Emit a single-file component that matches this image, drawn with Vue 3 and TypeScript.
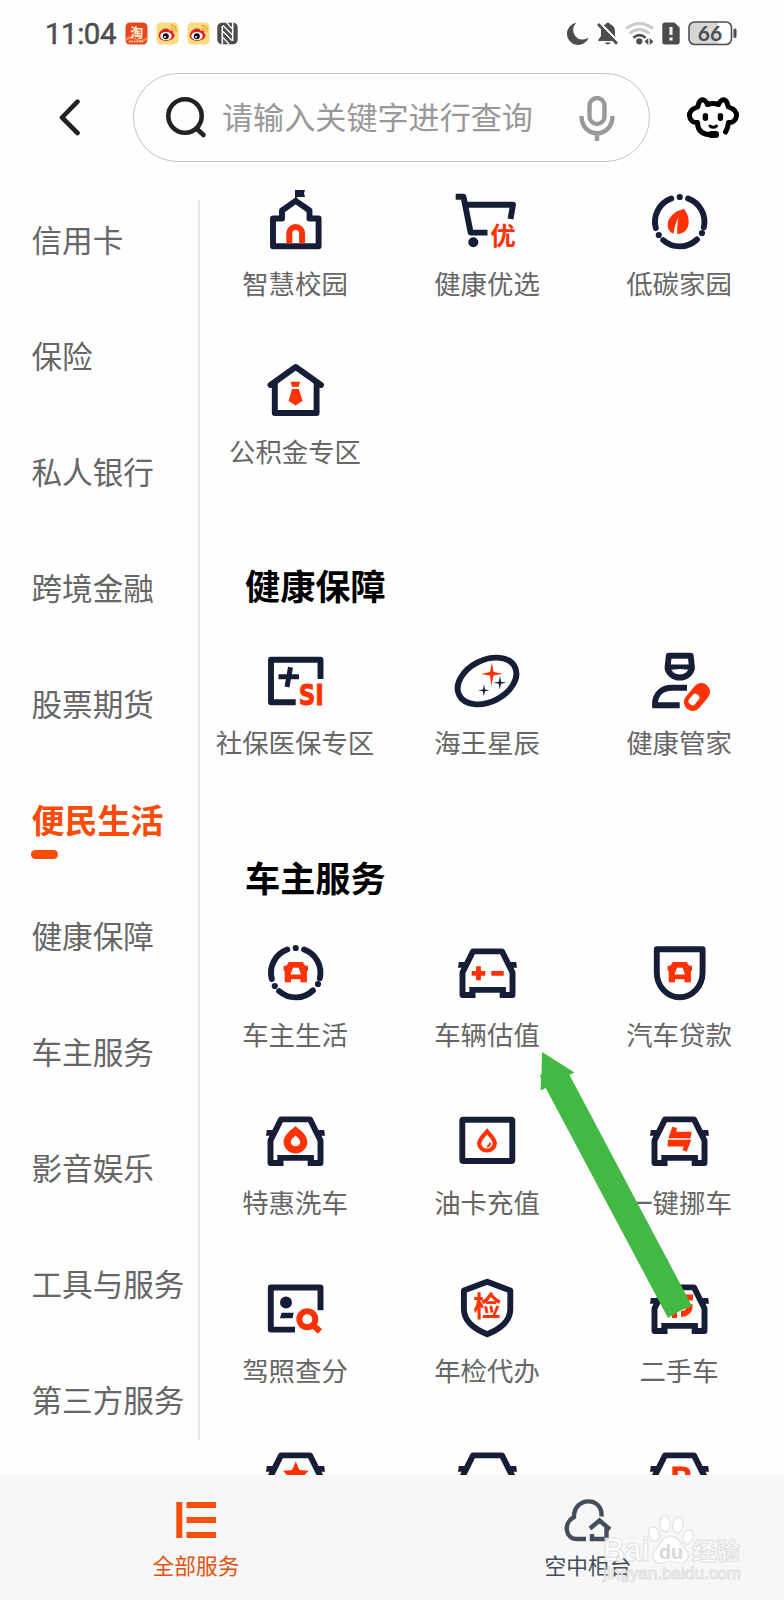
<script setup lang="ts">
interface Service {
  icon: string
  label: string
}
interface Section {
  title: string
  items: Service[]
}

const menu: string[] = [
  '信用卡', '保险', '私人银行', '跨境金融', '股票期货', '便民生活',
  '健康保障', '车主服务', '影音娱乐', '工具与服务', '第三方服务',
]
const activeMenu = '便民生活'

const sections: Section[] = [
  {
    title: '',
    items: [
      { icon: 'school', label: '智慧校园' },
      { icon: 'cart', label: '健康优选' },
      { icon: 'leaf', label: '低碳家园' },
      { icon: 'house', label: '公积金专区' },
    ],
  },
  {
    title: '健康保障',
    items: [
      { icon: 'social', label: '社保医保专区' },
      { icon: 'stars', label: '海王星辰' },
      { icon: 'doctor', label: '健康管家' },
    ],
  },
  {
    title: '车主服务',
    items: [
      { icon: 'carlife', label: '车主生活' },
      { icon: 'carvalue', label: '车辆估值' },
      { icon: 'carloan', label: '汽车贷款' },
      { icon: 'carwash', label: '特惠洗车' },
      { icon: 'oilcard', label: '油卡充值' },
      { icon: 'carmove', label: '一键挪车' },
      { icon: 'licence', label: '驾照查分' },
      { icon: 'inspect', label: '年检代办' },
      { icon: 'usedcar', label: '二手车' },
      { icon: 'carstar', label: '' },
      { icon: 'car', label: '' },
      { icon: 'carpark', label: '' },
    ],
  },
]

const carIcons = ['carvalue', 'carwash', 'carmove', 'usedcar', 'carstar', 'car', 'carpark']
const ringIcons = ['leaf', 'carlife']
</script>

<template>
  <div class="page">
    <div class="status">
      <span class="time">11:04</span>
      <svg class="app" width="23" height="23" viewBox="0 0 23 23">
        <rect x=".5" y=".5" width="22" height="22" rx="4.5" fill="#e8481f" />
        <path d="M1 16Q6 12 11 16T22 15V18Q16 21 11 18T1 19Z" fill="#f58a4c" />
        <text x="11.7" y="14.6" font-size="13" font-weight="700" text-anchor="middle" fill="#fff1d6">淘</text>
        <path d="M4 19.5h15" stroke="#ffd9b0" stroke-width="2" stroke-dasharray="1.5 1" />
      </svg>
      <svg v-for="n in 2" :key="n" class="app" width="23" height="23" viewBox="0 0 23 23">
        <rect x=".5" y=".5" width="22" height="22" rx="4.5" fill="#fbdc7c" />
        <path d="M10 6.5C5 7 1.500 11.500 3 15.300 4.500 19 11 20 15.500 17.500 19 15.500 19.500 12.500 17 11 17.500 9 16 7.800 13.300 8.700 13.300 7 12 6.300 10 6.500Z" fill="#d8232a" />
        <ellipse cx="10" cy="14" rx="5.700" ry="4.100" fill="#fff" />
        <circle cx="9.800" cy="14.200" r="3" fill="#111" />
        <circle cx="9" cy="15" r="1" fill="#fff" />
        <path d="M15 3.500Q20.500 3.500 20 9.500M15 6.300Q17.700 6.300 17.500 9" fill="none" stroke="#eda43a" stroke-width="1.300" stroke-linecap="round" />
      </svg>
      <svg class="nfc" width="21" height="23" viewBox="0 0 21 23">
        <rect x=".3" y=".7" width="20.400" height="21.600" rx="4.500" fill="#4d4d4d" />
        <path d="M5.300 4V22.500M15.700 .500V19" stroke="#fff" stroke-width="1.500" fill="none" />
        <path d="M6 3.500L15 12.500M6 9.500L15 18.500M6 15.500L12 22M9.500 .500L15 6.500" stroke="#fff" stroke-width="1.200" fill="none" />
      </svg>
      <span class="grow"></span>
      <svg class="moon" width="22" height="23" viewBox="0 0 22 23">
        <path d="M9.500 .700A11.200 11.200 0 1 0 21.800 15.300A9.500 9.500 0 0 1 9.500 .700Z" fill="#4d4d4d" />
      </svg>
      <svg class="bell" width="21" height="23" viewBox="0 0 21 23">
        <path d="M1.500 19V17.500L4 14V9C4 5 6.500 2.800 8.800 2.300 8.800 .100 13 .100 13 2.300 15.500 3 18 5.500 18 9V14L20 17.500V19Z" fill="#4d4d4d" />
        <path d="M7.500 20.500h6.500q-3.200 4-6.500 0Z" fill="#4d4d4d" />
        <path d="M2.500 0.500L21 19.500" stroke="#fff" stroke-width="2.400" />
        <path d="M1 2L20 21.700" stroke="#4d4d4d" stroke-width="2.800" />
      </svg>
      <svg class="wifi" width="29" height="23" viewBox="0 0 29 23">
        <g fill="none" stroke-width="2.800">
          <path d="M1 6.700Q14.500-3.700 28 6.700M4.500 11.500Q14.500 3.500 24.500 11.500" stroke="#c9c9c9" />
          <path d="M8.500 15.800Q14.500 10.500 20.500 15.800" stroke="#4d4d4d" />
        </g>
        <circle cx="14.300" cy="19.300" r="3.100" fill="#4d4d4d" />
        <path d="M19.500 19.500L23.300 16V23ZM28.500 19.500L24.700 16V23Z" fill="#4d4d4d" />
      </svg>
      <svg class="sim" width="18" height="23" viewBox="0 0 18 23">
        <path d="M3 .500H12.500L17.700 5.500V20Q17.700 22.500 15 22.500H3Q.300 22.500 .300 20V3Q.300 .500 3 .500Z" fill="#4d4d4d" />
        <path d="M9 5V13M9 15.500V18.500" stroke="#fff" stroke-width="3" />
      </svg>
      <svg class="battery" width="49" height="25" viewBox="0 0 49 25">
        <path d="M6 1.500H30V23H6Q1.500 23 1.500 19V6Q1.500 1.500 6 1.500Z" fill="#d6d6d6" />
        <rect x="1" y="1" width="42.500" height="22.500" rx="5.500" fill="none" stroke="#4d4d4d" stroke-width="1.600" />
        <path d="M47 9V15.500" stroke="#4d4d4d" stroke-width="3" stroke-linecap="round" />
        <text class="digits" x="22" y="19.700" font-size="21" font-weight="700" text-anchor="middle" fill="#4d4d4d">66</text>
      </svg>
    </div>

    <header class="header">
      <svg class="back" width="24" height="40" viewBox="0 0 24 40">
        <path d="M18.500 3.700L3 19.500L18.500 35" fill="none" stroke="#222" stroke-width="4.600" stroke-linecap="round" stroke-linejoin="round" />
      </svg>
      <div class="search">
        <svg width="42" height="42" viewBox="0 0 42 42">
          <circle cx="19" cy="19" r="16.700" fill="none" stroke="#222" stroke-width="4.600" />
          <path d="M31.500 32.500L37.500 38" stroke="#222" stroke-width="4.600" stroke-linecap="round" />
        </svg>
        <span class="placeholder">请输入关键字进行查询</span>
        <svg width="36" height="46" viewBox="0 0 36 46" fill="none" stroke="#999" stroke-width="4.400">
          <rect x="10.500" y="3" width="15" height="26" rx="7.500" />
          <path d="M2.500 21C2.500 44 33.500 44 33.500 21M18 38V46" />
        </svg>
      </div>
      <svg class="service" width="56" height="44" viewBox="0 0 56 44">
        <g fill="none" stroke="#000" stroke-width="5" stroke-linecap="round" stroke-linejoin="round">
          <path d="M22.500 8.500Q28 6.700 33.500 8.500C35 4.500 38 2.800 40.500 4.500C42.500 6 42.300 9 43.500 11C48 12.500 52 15.500 51.500 20C51 24.500 47.500 27 43.500 26.500C43 30 42.500 33 40.500 36M22.500 8.500C21 4.500 18 2.800 15.500 4.500C13.500 6 13.700 9 12.500 11C8 12.500 4 15.500 4.500 20C5 24.500 8.500 27 12.500 26.500C12.500 35 18 38.500 26 38.700" />
        </g>
        <rect x="17.700" y="17" width="5.400" height="8" rx="2.700" />
        <rect x="32.700" y="17" width="5.400" height="8" rx="2.700" />
        <path d="M25 30Q28.300 32.500 31.500 30" fill="none" stroke="#000" stroke-width="3" stroke-linecap="round" />
        <rect x="23" y="35" width="11" height="7" rx="3.300" />
      </svg>
    </header>

    <main class="main">
      <nav class="menu">
        <div v-for="m in menu" :key="m" class="menu-item" :class="{ active: m === activeMenu }">
          <span>{{ m }}</span>
        </div>
      </nav>
      <div class="content">
        <section v-for="s in sections" :key="s.title" class="section">
          <h2 v-if="s.title">{{ s.title }}</h2>
          <div class="grid">
            <div v-for="item in s.items" :key="item.icon" class="cell">
              <svg class="icon" width="72" height="72" viewBox="0 0 72 72">
                <g v-if="carIcons.includes(item.icon)">
                  <path class="line" d="M18.300 53.900H54.900M24.500 59H11.500V36.500L22 15.400H51L61.500 36.500V59H48.700" />
                  <path class="ink" d="M7.800 26H17L14 35L10.500 31.700H7ZM65.200 26H56L59 35L62.500 31.700H66Z" />
                </g>
                <g v-if="ringIcons.includes(item.icon)">
                  <path class="line round" d="M45.100 13.500A24.800 24.800 0 0 1 60.800 42.300M53.900 54.500A24.800 24.800 0 0 1 20.200 55.100M12.800 43.100A24.800 24.800 0 0 1 28.300 13.500" />
                  <circle class="ink" cx="36.700" cy="12" r="3.100" />
                  <circle class="ink" cx="59" cy="48" r="3.100" />
                  <circle class="ink" cx="15.800" cy="50" r="3.100" />
                </g>
                <path v-if="item.icon === 'carlife' || item.icon === 'carloan'" class="hot" fill-rule="evenodd" d="M30 26H43.500L46 29.500L49 30V34.500L47.900 35V46.300H41.500V43.300H32V46.300H25.700V35L24.600 34.500V30L27.500 29.500ZM34 31.700H39.700L42 38.500H31.500Z" />

                <g v-if="item.icon === 'school'">
                  <path class="line" d="M14 61.200V33.500H23V25.500L36.700 15.800L50.500 25.500V33.500H59.600V61.200Z" />
                  <path class="ink" d="M36 5H46L45 8L46 12H38V17H36Z" />
                  <path class="hotline" d="M30.300 58.400V48.500A6.400 6.400 0 0 1 43.100 48.500V58.400" />
                </g>
                <g v-else-if="item.icon === 'cart'">
                  <path class="line" d="M4.700 11.800H12.500L19.700 47.600H36.500M14.500 19.700H62L59.500 34" />
                  <circle class="ink" cx="22.300" cy="57.300" r="5" />
                  <text class="mark" x="52" y="60" font-size="25.500">优</text>
                </g>
                <path v-else-if="item.icon === 'leaf'" class="hot" d="M41 24C31 26 24.500 33 24.700 40C24.800 44.500 27 47.500 30.500 48.700C31.500 42 33 37 35.700 31.700C34.500 37 34 43 34.200 49C42 49 46 43 45.700 36C45.500 31 43.500 27 41 24Z" />
                <g v-else-if="item.icon === 'house'">
                  <path class="line" d="M15.800 30V60H57.600V30" />
                  <path class="line round" d="M11.500 32L36.700 14L62 32" />
                  <path class="hot" d="M31.700 28.700H41L39.700 33.800H33ZM33 36H39.800L43.500 48L36.600 52.500L29.600 48Z" />
                </g>
                <g v-else-if="item.icon === 'social'">
                  <path class="line" d="M61.500 35V15.700H12V58.300H36.700" />
                  <path class="line plus" d="M19.500 32.700H40M31.500 23.300L28 43" />
                  <text class="mark wide" x="52.300" y="60.500" font-size="29" textLength="25" lengthAdjust="spacingAndGlyphs" stroke="#fe3204">SI</text>
                </g>
                <g v-else-if="item.icon === 'stars'">
                  <ellipse class="line" cx="36" cy="37" rx="31.200" ry="20.800" transform="rotate(-27 36 37)" />
                  <path class="hot" d="M41 18.500L42.500 28L52 29.800L42.500 31.500L40.300 42L39 31.500L30 30L39 28Z" />
                  <path class="ink" d="M49 32L50 37.700L55.500 38.700L50 39.700L48.700 45.500L47.700 39.700L42.500 38.700L47.700 37.700ZM33 40.500L34 45.500L38.500 46.300L34 47.200L32.700 52L31.800 47.200L27 46.300L31.800 45.500Z" />
                </g>
                <g v-else-if="item.icon === 'doctor'">
                  <path class="line" d="M25.800 11.800H47.700L49 24A12.400 11.300 0 0 1 24.500 24ZM12 61.300C11.500 50 19 43.700 29 43.700H44M9.200 61.300H36.700" />
                  <path class="ink" d="M24 20.500H50V26.500Q37 23.500 24 26.500Z" />
                  <rect class="hot" x="38.500" y="44.200" width="31" height="17.600" rx="8.800" transform="rotate(-50 54 53)" />
                  <rect fill="#fff" x="45" y="51.700" width="12" height="7.500" rx="3" transform="rotate(-50 51 55.500)" />
                </g>
                <g v-else-if="item.icon === 'carvalue'">
                  <path class="hotline thin" d="M20.700 37.300H34.300M27.500 30.300V44.300M40.300 37.300H52.700" />
                </g>
                <path v-else-if="item.icon === 'carloan'" class="line" d="M13.800 13.200H59.600V36.500A22.900 24.700 0 0 1 13.800 36.500Z" />
                <path v-else-if="item.icon === 'carwash'" class="hot" fill-rule="evenodd" d="M36.500 22C40 25.500 48.400 30.500 48.400 37.800A11.900 11.700 0 0 1 24.600 37.800C24.600 30.500 33 25.500 36.500 22ZM36.500 31.500C34.500 33.500 31.800 35.500 31.800 38A4.700 4.300 0 0 0 41.200 38C41.200 35.500 38.500 33.500 36.500 31.500Z" />
                <g v-else-if="item.icon === 'oilcard'">
                  <rect class="line" x="11.300" y="15.700" width="50" height="41.300" rx="1" />
                  <path class="hotline drop" d="M36.200 27.500C38.500 30.500 43.800 35 43.800 39.500A7.800 7 0 0 1 28.200 39.500C28.200 35 33.500 30.500 36.200 27.500Z" />
                  <path class="hotline fine" d="M36 42.700Q39 42 39.300 38.700" />
                </g>
                <path v-else-if="item.icon === 'carmove'" class="hot" d="M29.300 22.700L34 24L33.300 27.700H48.700L47.500 34.300H25.300ZM24.900 35.700H48.300L43.700 47.700L39.500 46.300L40.700 42.500H24.600Z" />
                <g v-else-if="item.icon === 'licence'">
                  <path class="line" d="M61.500 38.300V15.500H11.800V57.600H36" />
                  <circle class="ink" cx="27" cy="30.600" r="6" />
                  <path class="ink" d="M22.500 40.700H34.700L33.500 46.300H21Z" />
                  <circle class="hotline" cx="48.300" cy="47.300" r="8" />
                  <path class="hotline" d="M53 52L61 59.500" />
                </g>
                <g v-else-if="item.icon === 'inspect'">
                  <path class="line" d="M36.200 9.700L59.300 18.500V37C59.300 50 48 57.500 36.200 62.200C24.500 57.500 12.900 50 12.900 37V18.500Z" />
                  <text class="mark" x="36.300" y="45.300" font-size="28">检</text>
                </g>
                <path v-else-if="item.icon === 'usedcar'" class="hotline" d="M36 25.500H50M46.500 32V33C47 38 44 42 38 42M29 43H34" />
                <path v-else-if="item.icon === 'carstar'" class="hot" d="M36.700 21.500L40.500 30L49.500 30.800L43 38L45 46L36.700 42L28.500 46L30.500 38L24 30.800L33 30Z" />
                <text v-else-if="item.icon === 'carpark'" class="mark latin" x="38" y="46.500" font-size="30" stroke="#fe3204">P</text>
              </svg>
              <span v-if="item.label" class="label">{{ item.label }}</span>
            </div>
          </div>
        </section>
      </div>
    </main>

    <footer class="tabs">
      <div class="tab on">
        <svg width="48" height="44" viewBox="0 0 48 44" fill="#f4500c">
          <path d="M4.300 4H10.300V40H4.300ZM14.500 4H44V10H14.500ZM14.500 19H44V25H14.500ZM14.500 34H44V40H14.500Z" />
        </svg>
        <span>全部服务</span>
      </div>
      <div class="tab">
        <svg width="48" height="44" viewBox="0 0 48 44" fill="none" stroke="#434d5c" stroke-width="4.400">
          <path d="M37.500 18.500C39 -2 9.500 -1.500 10 19C-1 25 1 41 13 41H22M26 30.500L35.500 22.500L46 31.500M28 36V41H42.500V30" />
        </svg>
        <span>空中柜台</span>
      </div>
    </footer>

    <svg class="arrow" width="154" height="268" viewBox="0 0 154 268">
      <path d="M3 1L35.500 21.500L30.500 24L153 255Q141 259 129 267L6.700 37L1.500 39.500L2 27L1 25L2.500 23Z" fill="#43b944" />
    </svg>
    <svg class="watermark latin" width="146" height="72" viewBox="0 0 146 72">
      <g fill="#fff" fill-opacity=".85" stroke="#d4d4d4" stroke-opacity=".65" stroke-width="1.200">
        <text x="2" y="47" font-size="33" font-weight="700" textLength="47" lengthAdjust="spacingAndGlyphs">Bai</text>
        <ellipse cx="53" cy="20" rx="5" ry="7.500" transform="rotate(-15 53 20)" />
        <ellipse cx="64" cy="10" rx="5.200" ry="8" />
        <ellipse cx="77" cy="11" rx="5.200" ry="8" transform="rotate(8 77 11)" />
        <ellipse cx="87" cy="23" rx="5" ry="7.500" transform="rotate(18 87 23)" />
        <path d="M69.500 22C79 22 80 32 85 36C90 42 86 49 79 49Q70 46 61 49C53 50 49 42 54 36C60 32 60 22 69.500 22Z" />
        <text x="91" y="46" font-size="24" font-weight="700">经验</text>
        <text x="2" y="65" font-size="17" textLength="138" lengthAdjust="spacingAndGlyphs">jingyan.baidu.com</text>
      </g>
      <text x="58" y="45" font-size="21" font-weight="700" textLength="24" lengthAdjust="spacingAndGlyphs" fill="#d8d8d8">du</text>
    </svg>
  </div>
</template>

<style>
body {
  margin: 0;
  background: #fefefe;
}
</style>

<style scoped>
.page {
  position: relative;
  display: flex;
  flex-direction: column;
  width: 784px;
  height: 1600px;
  overflow: hidden;
  background: #fefefe;
  font-family: "Noto Sans CJK SC", sans-serif;
}
svg {
  display: block;
  flex: none;
}
.status {
  display: flex;
  align-items: center;
  box-sizing: border-box;
  height: 66px;
  padding: 0 47px 0 45px;
}
.time {
  width: 79.5px;
  padding-top: 2px;
  font: 400 29.5px/40px Roboto, sans-serif;
  letter-spacing: -0.5px;
  color: #4d4d4d;
  -webkit-text-stroke: 0.5px #4d4d4d;
  white-space: nowrap;
}
.app {
  margin-right: 8.3px;
}
.nfc {
  margin-left: -1px;
}
.grow {
  flex: 1;
}
.moon {
  margin-right: 8px;
}
.bell {
  margin-right: 7px;
}
.wifi {
  margin-right: 8px;
}
.sim {
  margin-right: 8px;
}
.digits {
  font-family: Lato, sans-serif;
}
.header {
  display: flex;
  align-items: center;
  box-sizing: border-box;
  height: 104px;
  padding: 0 43px 1px 59px;
}
.search {
  display: flex;
  align-items: center;
  box-sizing: border-box;
  width: 517px;
  height: 89px;
  margin-left: 50px;
  padding: 0 34px 0 32px;
  border: 1px solid #c4c4c4;
  border-radius: 45px;
}
.placeholder {
  flex: 1;
  padding: 0 0 3px 14px;
  font-size: 31.1px;
  line-height: 44px;
  font-weight: 400;
  color: #999;
  white-space: nowrap;
}
.service {
  margin-left: auto;
}
.main {
  display: flex;
  height: 1305px;
  overflow: hidden;
}
.menu {
  display: flex;
  flex-direction: column;
  gap: 36px;
  box-sizing: border-box;
  width: 200px;
  height: 1240px;
  margin-top: 30px;
  padding-left: 31.500px;
  border-right: 2px solid #e6e6e6;
}
.menu-item {
  display: flex;
  flex-direction: column;
  justify-content: center;
  box-sizing: border-box;
  height: 80px;
  padding-bottom: 3px;
  font-size: 30.6px;
  line-height: 44px;
  color: #666;
  white-space: nowrap;
}
.menu-item.active {
  position: relative;
  font-size: 33px;
  font-weight: 700;
  color: #fa4b08;
}
.menu-item.active::after {
  content: "";
  position: absolute;
  left: -0.5px;
  bottom: 1px;
  width: 27px;
  height: 9px;
  border-radius: 5px;
  background: #fa4b08;
}
.content {
  width: 576px;
  padding-top: 15px;
}
.section + .section {
  margin-top: 88px;
}
.section + .section + .section {
  margin-top: 89px;
}
h2 {
  margin: 0 0 35px 45px;
  font-size: 35.2px;
  line-height: 48px;
  font-weight: 700;
  color: #000;
}
.grid {
  display: grid;
  grid-template-columns: repeat(3, 192px);
  row-gap: 50px;
  margin-left: -1px;
}
.section:not(:first-child) .grid {
  margin-bottom: 0;
}
.cell {
  display: flex;
  flex-direction: column;
  align-items: center;
  gap: 6px;
}
.section .grid {
  padding-bottom: 2px;
}
.label {
  font-size: 26.4px;
  line-height: 40px;
  font-weight: 400;
  color: #666;
  white-space: nowrap;
}
.line {
  fill: none;
  stroke: #161e37;
  stroke-width: 5.9px;
  stroke-linejoin: round;
}
.round {
  stroke-linecap: round;
}
.plus {
  stroke-width: 5px;
}
.ink {
  fill: #161e37;
}
.hot {
  fill: #fe3204;
}
.hotline {
  fill: none;
  stroke: #fe3204;
  stroke-width: 6px;
}
.hotline.thin {
  stroke-width: 4.8px;
}
.hotline.drop {
  stroke-width: 4.2px;
}
.hotline.fine {
  stroke-width: 2px;
}
.mark {
  font-weight: 700;
  text-anchor: middle;
  fill: #fe3204;
}
.wide {
  font-family: "DejaVu Sans", sans-serif;
}
.latin {
  font-family: "Liberation Sans", "Noto Sans CJK SC", sans-serif;
}
.tabs {
  display: flex;
  height: 125px;
  background: #f7f7f7;
}
.tab {
  display: flex;
  flex-direction: column;
  align-items: center;
  gap: 7px;
  box-sizing: border-box;
  width: 392px;
  padding-top: 23px;
  font-size: 21.7px;
  line-height: 32px;
  color: #434d5c;
}
.tab.on {
  color: #e2510f;
}
.arrow {
  position: absolute;
  left: 539px;
  top: 1051px;
}
.watermark {
  position: absolute;
  left: 601px;
  top: 1514px;
}
</style>
